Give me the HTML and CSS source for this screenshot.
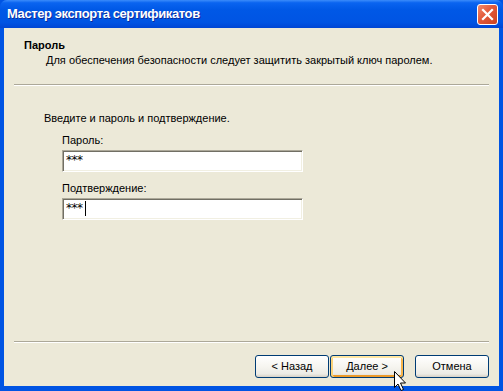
FILE: index.html
```html
<!DOCTYPE html>
<html lang="ru">
<head>
    <meta charset="UTF-8">
    <title>Мастер экспорта сертификатов</title>
    <link rel="stylesheet" href="styles.css">
</head>
<body>
    <div class="window">
        <div class="titlebar">
            <span class="title">Мастер экспорта сертификатов</span>
            <div class="close">
                <svg width="13" height="13" viewBox="0 0 13 13">
                    <path d="M2 2 L11 11 M11 2 L2 11" stroke="#fff" stroke-width="2.2" stroke-linecap="square"/>
                </svg>
            </div>
        </div>

        <div class="client">
            <!-- Wizard header -->
            <div class="header">
                <div class="head-title">Пароль</div>
                <div class="head-sub">Для обеспечения безопасности следует защитить закрытый ключ паролем.</div>
            </div>
            <div class="sep"></div>

            <!-- Page body -->
            <div class="page">
                <div class="intro">Введите и пароль и подтверждение.</div>
                <div class="field">
                    <div class="label">Пароль:</div>
                    <div class="box">***</div>
                </div>
                <div class="field">
                    <div class="label">Подтверждение:</div>
                    <div class="box">***<span class="caret"></span></div>
                </div>
            </div>
            <div class="sep"></div>

            <!-- Buttons -->
            <div class="buttons">
                <div class="btn">&lt; Назад</div>
                <div class="btn btn-default">Далее &gt;</div>
                <div class="btn btn-cancel">Отмена</div>
            </div>
        </div>

        <svg class="cursor" width="14" height="22" viewBox="0 0 14 22">
            <path d="M1.5 1.5 L1.5 17.5 L5 14 L8 20.5 L10.5 19.5 L7.5 13 L12.5 13 Z" fill="#fff" stroke="#000" stroke-width="1" stroke-linejoin="miter"/>
        </svg>
    </div>
</body>
</html>
```

FILE: styles.css
```css
* {
    margin: 0;
    padding: 0;
    box-sizing: border-box;
}

body {
    font-family: 'Liberation Sans', Arial, sans-serif;
    font-size: 11px;
    line-height: 13px;
    color: #000;
    background: #ece9d8;
}

.window {
    position: relative;
    width: 503px;
    height: 391px;
    display: flex;
    flex-direction: column;
    overflow: hidden;
    background: #0054e3;
}

.titlebar {
    height: 28px;
    flex: none;
    display: flex;
    align-items: center;
    justify-content: space-between;
    padding: 0 5px 0 7px;
    background: linear-gradient(to bottom, #3b8cfa 0%, #0a64f0 10%, #0058e6 35%, #0054e3 80%, #0046d4 100%);
    border-radius: 7px 7px 0 0;
}

.title {
    font-size: 13px;
    line-height: 16px;
    font-weight: bold;
    color: #fff;
    text-shadow: 1px 1px 0 #0f2c9a;
    letter-spacing: -0.4px;
}

.close {
    width: 21px;
    height: 21px;
    border: 1px solid #fff;
    border-radius: 3px;
    background: linear-gradient(135deg, #f28a6c 0%, #e2593a 45%, #cc4321 100%);
    display: flex;
    align-items: center;
    justify-content: center;
}

.client {
    flex: 1;
    display: flex;
    flex-direction: column;
    margin: 0 4px 5px 4px;
    background: #ece9d8;
}

.header {
    height: 56px;
    padding: 11px 0 0 20px;
}

.head-title {
    font-weight: bold;
}

.head-sub {
    margin-top: 2px;
    padding-left: 22px;
}

.sep {
    margin: 0 10px;
    height: 2px;
    border-top: 1px solid #aca899;
    border-bottom: 1px solid #fff;
}

.page {
    flex: 1;
    padding: 26px 0 0 40px;
}

.field {
    margin-top: 9px;
    padding-left: 18px;
}

.field + .field {
    margin-top: 10px;
}

.label {
    margin-bottom: 3px;
}

.box {
    width: 241px;
    height: 22px;
    background: #fff;
    border-top: 1px solid #aca899;
    border-left: 1px solid #aca899;
    border-right: 1px solid #fff;
    border-bottom: 1px solid #fff;
    box-shadow: inset 1px 1px 0 #716f64, inset -1px -1px 0 #f1efe2;
    padding: 3px 0 0 3px;
    font-family: 'DejaVu Sans', sans-serif;
    font-size: 12px;
    line-height: 12px;
    letter-spacing: -0.5px;
    display: flex;
    align-items: flex-start;
}

.caret {
    display: inline-block;
    width: 1px;
    height: 15px;
    margin: -1px 0 0 2px;
    background: #000;
}

.buttons {
    height: 43px;
    display: flex;
    justify-content: flex-end;
    padding: 12px 10px 0 0;
}

.btn {
    width: 74px;
    height: 23px;
    margin-left: 1px;
    border: 1px solid #003c74;
    border-radius: 3px;
    background: linear-gradient(to bottom, #ffffff 0%, #f6f5f0 50%, #ecebe5 85%, #d6d0c5 100%);
    display: flex;
    align-items: center;
    justify-content: center;
}

.btn-default {
    box-shadow: inset 0 2px 0 #ffe7a2, inset 2px 0 0 #fbd37a, inset -2px 0 0 #f8b54a, inset 0 -2px 0 #eb9a2a;
}

.btn-cancel {
    margin-left: 11px;
}

.cursor {
    position: absolute;
    left: 393px;
    top: 370px;
}
```
